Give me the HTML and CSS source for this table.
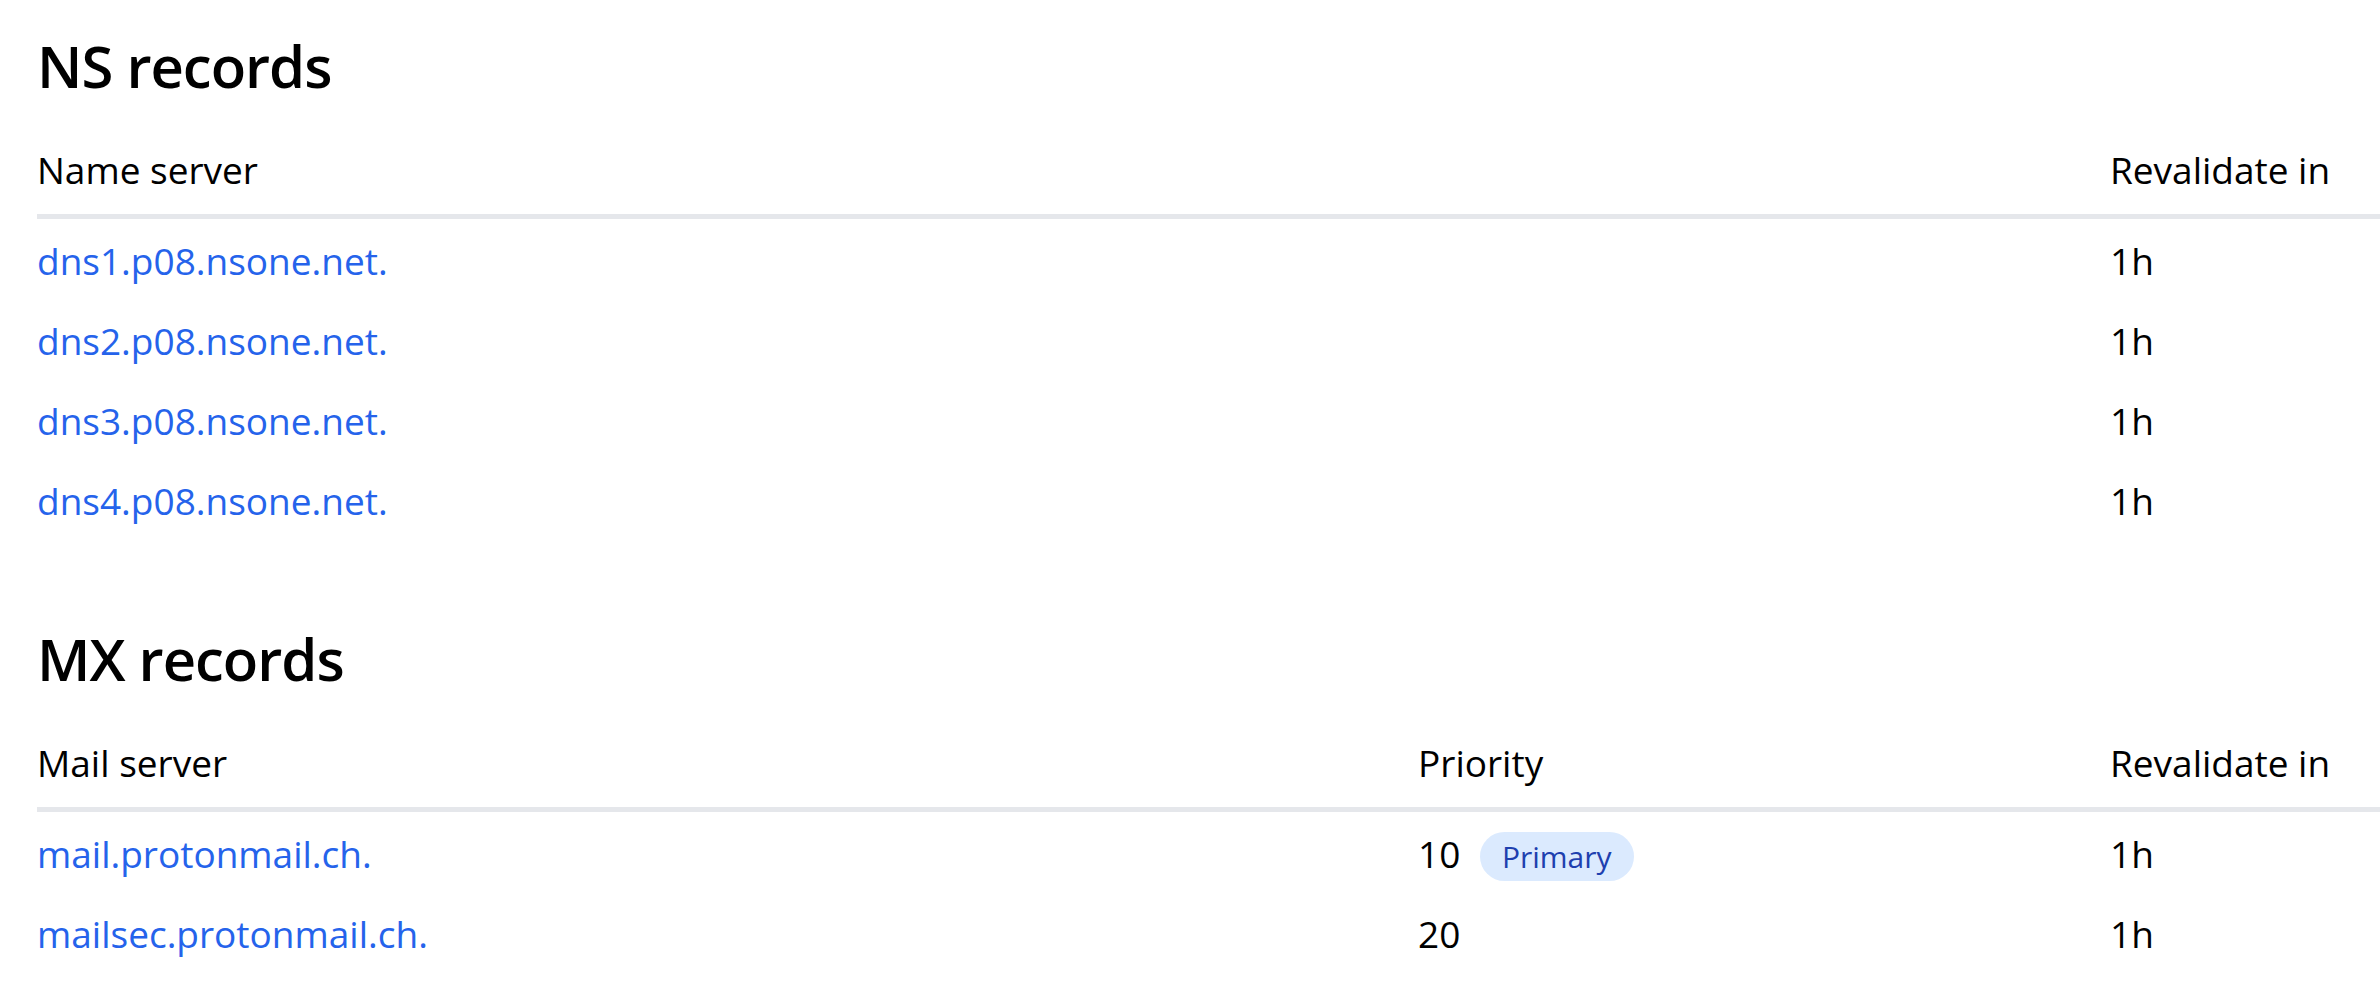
FILE: index.html
```html
<!DOCTYPE html>
<html>

<head>
  <title>DNS records</title>
  <link rel="stylesheet" href="styles.css">
</head>

<body>
  <div class="records-page">
    <section class="records-section">
      <h1>NS records</h1>
      <table class="records-table">
        <colgroup>
          <col>
          <col class="col-ttl">
        </colgroup>
        <thead>
          <tr>
            <th>Name server</th>
            <th>Revalidate in</th>
          </tr>
        </thead>
        <tbody>
          <tr>
            <td><a href="#">dns1.p08.nsone.net.</a></td>
            <td>1h</td>
          </tr>
          <tr>
            <td><a href="#">dns2.p08.nsone.net.</a></td>
            <td>1h</td>
          </tr>
          <tr>
            <td><a href="#">dns3.p08.nsone.net.</a></td>
            <td>1h</td>
          </tr>
          <tr>
            <td><a href="#">dns4.p08.nsone.net.</a></td>
            <td>1h</td>
          </tr>
        </tbody>
      </table>
    </section>

    <section class="records-section">
      <h1>MX records</h1>
      <table class="records-table">
        <colgroup>
          <col>
          <col class="col-priority">
          <col class="col-ttl">
        </colgroup>
        <thead>
          <tr>
            <th>Mail server</th>
            <th>Priority</th>
            <th>Revalidate in</th>
          </tr>
        </thead>
        <tbody>
          <tr>
            <td><a href="#">mail.protonmail.ch.</a></td>
            <td>10 <span class="badge">Primary</span></td>
            <td>1h</td>
          </tr>
          <tr>
            <td><a href="#">mailsec.protonmail.ch.</a></td>
            <td>20</td>
            <td>1h</td>
          </tr>
        </tbody>
      </table>
    </section>
  </div>
</body>

</html>
```

FILE: styles.css
```css
:root {
  --text: #000000;
  --link: #2563eb;
  --rule: #e5e7eb;
  --badge-bg: #dbeafe;
  --badge-text: #1e40af;
}

body {
  margin: 0;
  padding: 0;
  background-color: #ffffff;
  color: var(--text);
  font-family: "Open Sans", "Noto Sans", sans-serif;
  overflow: hidden;
}

.records-page {
  padding: 30px 0 0 37px;
  display: flex;
  flex-direction: column;
  gap: 84px;
}

.records-section h1 {
  margin: 0 0 41px 0;
  font-size: 58px;
  line-height: 72px;
  font-weight: 600;
  letter-spacing: -1px;
}

.records-table {
  width: 100%;
  border-collapse: collapse;
  table-layout: fixed;
  font-size: 37px;
  line-height: 54px;
}

.col-priority {
  width: 692px;
}

.col-ttl {
  width: 270px;
}

.records-table th {
  text-align: left;
  font-weight: 400;
  padding: 0 0 17px 0;
  border-bottom: 5px solid var(--rule);
}

.records-table td {
  padding: 15px 0 11px 0;
  white-space: nowrap;
}

.records-table a {
  color: var(--link);
  text-decoration: none;
}

/* Primary badge next to the priority */
.badge {
  display: inline-block;
  margin-left: 10px;
  padding: 0 22px;
  height: 49px;
  line-height: 49px;
  border-radius: 25px;
  background-color: var(--badge-bg);
  color: var(--badge-text);
  font-size: 30px;
  vertical-align: 0;
}
```
